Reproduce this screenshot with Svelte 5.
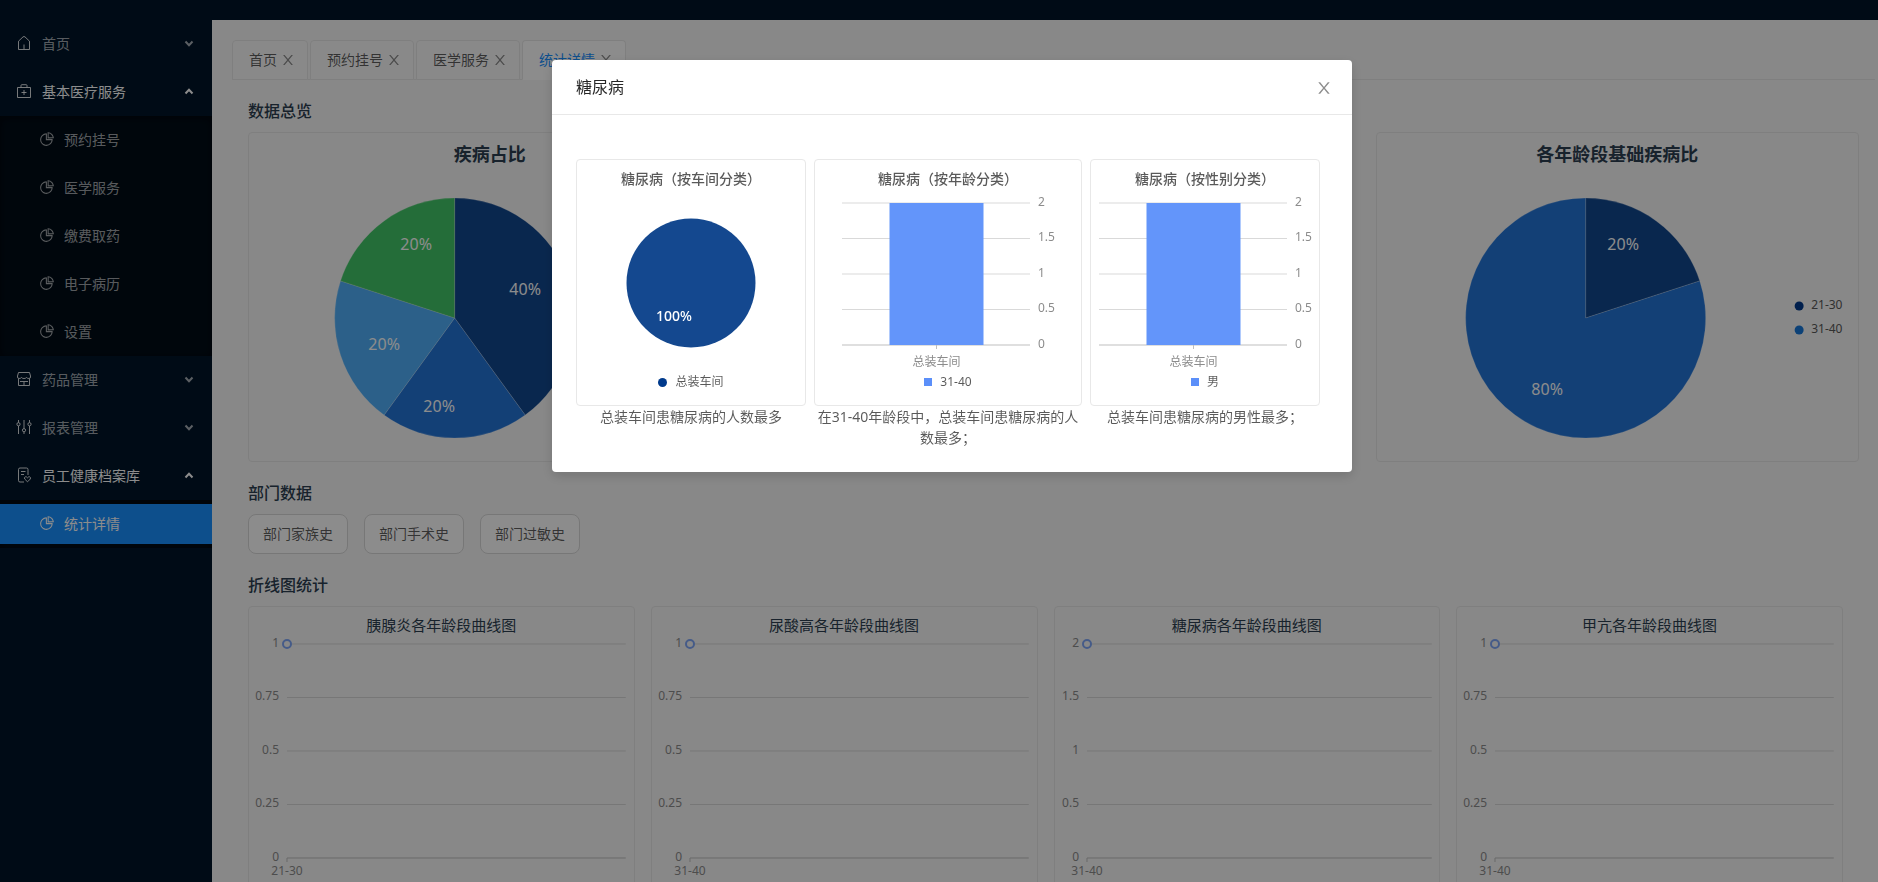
<script lang="ts">
  type Slice = { name: string; percent: number; color: string; x: number; y: number };

  const menu = [
    { title: "首页", icon: "home", open: false, children: [] },
    {
      title: "基本医疗服务",
      icon: "medicine",
      open: true,
      children: ["预约挂号", "医学服务", "缴费取药", "电子病历", "设置"],
    },
    { title: "药品管理", icon: "shop", open: false, children: [] },
    { title: "报表管理", icon: "sliders", open: false, children: [] },
    { title: "员工健康档案库", icon: "record", open: true, children: ["统计详情"] },
  ];

  const tabs = ["首页", "预约挂号", "医学服务", "统计详情"];
  const departments = ["部门家族史", "部门手术史", "部门过敏史"];
  let current = $state("统计详情");
  let modalOpen = $state(true);

  const diseaseSlices: Slice[] = [
    { name: "a", percent: 40, color: "#12488f", x: 276, y: 121 },
    { name: "b", percent: 20, color: "#2375d8", x: 190, y: 238 },
    { name: "c", percent: 20, color: "#50b0fa", x: 135, y: 176 },
    { name: "d", percent: 20, color: "#43c768", x: 167, y: 76 },
  ];

  const ageSlices: Slice[] = [
    { name: "21-30", percent: 20, color: "#12488f", x: 246, y: 76 },
    { name: "31-40", percent: 80, color: "#2375d8", x: 170, y: 221 },
  ];

  const ageLegend = [
    { name: "21-30", color: "#003a8c" },
    { name: "31-40", color: "#1677d9" },
  ];

  const barTicks = ["2", "1.5", "1", "0.5", "0"];
  const quarterTicks = ["1", "0.75", "0.5", "0.25", "0"];

  const lineCharts = [
    { title: "胰腺炎各年龄段曲线图", ticks: quarterTicks, age: "21-30" },
    { title: "尿酸高各年龄段曲线图", ticks: quarterTicks, age: "31-40" },
    { title: "糖尿病各年龄段曲线图", ticks: barTicks, age: "31-40" },
    { title: "甲亢各年龄段曲线图", ticks: quarterTicks, age: "31-40" },
  ];

  // Room for the widest label left of the axis
  function gutter(ticks: string[]) {
    const longest = Math.max(...ticks.map((t) => t.length));
    return longest > 3 ? 38 : 32;
  }

  // Pie slices as paths, clockwise from twelve o'clock
  function slicePaths(slices: Slice[], cx: number, cy: number, r: number) {
    let start = 0;
    return slices.map((s) => {
      const end = start + (s.percent / 100) * Math.PI * 2;
      const x1 = cx + r * Math.sin(start);
      const y1 = cy - r * Math.cos(start);
      const x2 = cx + r * Math.sin(end);
      const y2 = cy - r * Math.cos(end);
      const large = s.percent > 50 ? 1 : 0;
      start = end;
      return { ...s, d: `M${cx} ${cy}L${x1} ${y1}A${r} ${r} 0 ${large} 1 ${x2} ${y2}Z` };
    });
  }
</script>

{#snippet closeIcon()}
  <svg class="close-icon" viewBox="0 0 1024 1024" aria-hidden="true">
    <path
      d="M563.8 512l262.5-312.9c4.4-5.2.7-13.1-6.1-13.1h-79.8c-4.7 0-9.2 2.1-12.3 5.7L511.6 449.8 295.1 191.7c-3-3.6-7.5-5.7-12.3-5.7H203c-6.8 0-10.5 7.9-6.1 13.1L459.4 512 196.9 824.9A7.95 7.95 0 0 0 203 838h79.8c4.7 0 9.2-2.1 12.3-5.7l216.5-258.1 216.5 258.1c3 3.6 7.5 5.7 12.3 5.7h79.8c6.8 0 10.5-7.9 6.1-13.1L563.8 512z"
    />
  </svg>
{/snippet}

{#snippet menuIcon(name: string)}
  <svg class="menu-icon" viewBox="0 0 16 16" aria-hidden="true">
    {#if name === "home"}
      <path d="M2.5 14.5V6.2L7 1.9q1-.8 2 0l4.5 4.3v8.3zM8 14V9.5" />
    {:else if name === "medicine"}
      <path d="M1.5 4.5h13v10h-13zM5 4.300V2.500q0-.8.8-.8h4.400q.8 0 .8.8v1.800M8 7v5M5.500 9.500h5" />
    {:else if name === "shop"}
      <path d="M2.5 7.8v6.7h11V7.8M2.5 1.500h11l1 3.500v1q0 1.500-1.600 1.500T10.500 6.500q-.8 1-2.500 1t-2.500-1q-.8 1-2.400 1T1.500 6V5zM4 10.500h8M8 11v3.200" />
    {:else if name === "sliders"}
      <path d="M2.5 1v2.500M2.500 7v8M8 1v8.500M8 13v2M13.500 1v2.500M13.500 7v8" />
      <circle cx="2.5" cy="5.2" r="1.6" />
      <circle cx="8" cy="11.2" r="1.6" />
      <circle cx="13.5" cy="5.2" r="1.6" />
    {:else if name === "record"}
      <path d="M8 15H4q-1.500 0-1.500-1.500v-11Q2.500 1 4 1h6.500Q12 1 12 2.500V8M5 4.500h4.500M5 7.500h3" />
      <path d="M11.500 14.800 8.700 12q-.8-1.700.7-2.200 1.300-.2 2.100 1 .8-1.200 2.100-1 1.500.5.7 2.200z" />
    {:else}
      <path
        class="solid"
        transform="scale(.015625)"
        d="M864 518H506V160c0-4.4-3.6-8-8-8h-26a398.46 398.46 0 0 0-282.8 117.1 398.19 398.19 0 0 0-85.7 127.1A397.61 397.61 0 0 0 72 552a398.46 398.46 0 0 0 117.1 282.8c36.7 36.7 79.5 65.6 127.1 85.7A397.61 397.61 0 0 0 472 952a398.46 398.46 0 0 0 282.8-117.1c36.7-36.7 65.6-79.5 85.7-127.1A397.61 397.61 0 0 0 872 552v-26c0-4.4-3.6-8-8-8zM705.7 787.8A331.59 331.59 0 0 1 470.4 884c-88.1-.4-170.9-34.9-233.2-97.2C174.5 724.1 140 640.7 140 552c0-88.7 34.5-172.1 97.2-234.8 54.6-54.6 124.9-87.9 200.8-95.5V586h364.3c-7.7 76.3-41.3 147-96.6 201.8zM952 462.4l-2.6-28.2c-8.5-92.1-49.4-179-115.2-244.6A399.4 399.4 0 0 0 589 74.6L560.7 72c-4.7-.4-8.7 3.2-8.7 7.9V464c0 4.4 3.6 8 8 8l384-1c4.7 0 8.4-4 8-8.6zm-332.2-58.2V147.6a332.24 332.24 0 0 1 166.4 89.8c45.7 45.6 77 103.6 90 166.1l-256.4.7z"
      />
    {/if}
  </svg>
{/snippet}

{#snippet bigPie(slices: Slice[], cx: number, legend: { name: string; color: string }[])}
  <svg class="big-pie" viewBox="0 0 481 293">
    {#each slicePaths(slices, cx, 150, 120) as s (s.name)}
      <path class="slice" d={s.d} fill={s.color} />
    {/each}
    {#each slices as s (s.name)}
      <text class="slice-label" x={s.x} y={s.y}>{s.percent}%</text>
    {/each}
    {#each legend as item, i (item.name)}
      <circle cx="422" cy={138 + i * 24} r="4.5" fill={item.color} />
      <text class="legend-label" x="434" y={136 + i * 24}>{item.name}</text>
    {/each}
  </svg>
{/snippet}

{#snippet barChart()}
  <svg class="small-chart" viewBox="0 0 228 180">
    {#each barTicks as tick, i (tick)}
      <line class={tick === "0" ? "axis" : "grid"} x1="8" x2="196" y1={13 + i * 35.5} y2={13 + i * 35.5} />
      <text class="axis-label" x="204" y={11 + i * 35.5}>{tick}</text>
    {/each}
    <rect class="bar" x="55.5" y="13" width="94" height="142" />
    <line class="axis" x1="102.5" x2="102.5" y1="155" y2="159" />
    <text class="axis-label middle" x="102.5" y="171">总装车间</text>
  </svg>
{/snippet}

<div class="layout">
  <header class="topbar"></header>
  <div class="body">
    <nav class="sider">
      {#each menu as group (group.title)}
        <button class="menu-title" class:open={group.open} aria-expanded={group.open}>
          {@render menuIcon(group.icon)}
          <span>{group.title}</span>
          <svg class="arrow" viewBox="0 0 10 10" aria-hidden="true">
            <path d={group.open ? "M1.5 7.5 5 3.7 8.5 7.5" : "M1.5 3.5 5 7.3 8.5 3.5"} />
          </svg>
        </button>
        {#if group.open}
          <ul class="submenu">
            {#each group.children as item (item)}
              <li>
                <a class="menu-item" class:selected={item === current} href="#{item}">
                  {@render menuIcon("pie")}
                  <span>{item}</span>
                </a>
              </li>
            {/each}
          </ul>
        {/if}
      {/each}
    </nav>

    <main class="main">
      <div class="tabs">
        {#each tabs as tab (tab)}
          <div class="tab" class:active={tab === current}>
            <button class="tab-name" onclick={() => (current = tab)}>{tab}</button>
            <button class="tab-close" aria-label="关闭{tab}">{@render closeIcon()}</button>
          </div>
        {/each}
      </div>

      <div class="content">
        <h2>数据总览</h2>
        <div class="overview">
          <section class="card pie-card">
            <h3>疾病占比</h3>
            {@render bigPie(diseaseSlices, 205.5, [])}
          </section>
          <section class="card pie-card">
            <h3>各年龄段基础疾病比</h3>
            {@render bigPie(ageSlices, 208.5, ageLegend)}
          </section>
        </div>

        <h2>部门数据</h2>
        <div class="departments">
          {#each departments as name (name)}
            <button class="department">{name}</button>
          {/each}
        </div>

        <h2>折线图统计</h2>
        <div class="lines">
          {#each lineCharts as chart (chart.title)}
            <section class="card line-card">
              <h3>{chart.title}</h3>
              <div class="plot" style:padding-left="{gutter(chart.ticks)}px">
                <svg class="line-chart">
                  {#each chart.ticks as tick, i (tick)}
                    <line class={tick === "0" ? "axis" : "grid"} x1="0" x2="100%" y1={7 + i * 53.5} y2={7 + i * 53.5} />
                    <text class="axis-label end" x="-8" y={5 + i * 53.5}>{tick}</text>
                  {/each}
                  <line class="axis" x1="0" x2="0" y1="221" y2="225" />
                  <text class="axis-label middle" x="0" y="233">{chart.age}</text>
                  <circle class="point" cx="0" cy="7" r="4" />
                </svg>
              </div>
            </section>
          {/each}
        </div>
      </div>
    </main>
  </div>
</div>

{#if modalOpen}
  <div class="mask">
    <div class="modal" role="dialog" aria-modal="true" aria-labelledby="modal-title">
      <div class="modal-header">
        <h2 id="modal-title">糖尿病</h2>
        <button class="modal-close" aria-label="关闭" onclick={() => (modalOpen = false)}>
          {@render closeIcon()}
        </button>
      </div>
      <div class="modal-body">
        <figure>
          <div class="card small-card">
            <h3>糖尿病（按车间分类）</h3>
            <svg class="small-chart" viewBox="0 0 228 180">
              <circle cx="114" cy="93" r="64.5" fill="#14488f" />
              <text class="slice-label small" x="97" y="125">100%</text>
            </svg>
            <div class="legend"><i class="dot"></i>总装车间</div>
          </div>
          <figcaption>总装车间患糖尿病的人数最多</figcaption>
        </figure>
        <figure>
          <div class="card small-card">
            <h3>糖尿病（按年龄分类）</h3>
            {@render barChart()}
            <div class="legend"><i class="square"></i>31-40</div>
          </div>
          <figcaption>在31-40年龄段中，总装车间患糖尿病的人数最多；</figcaption>
        </figure>
        <figure>
          <div class="card small-card">
            <h3>糖尿病（按性别分类）</h3>
            {@render barChart()}
            <div class="legend"><i class="square"></i>男</div>
          </div>
          <figcaption>总装车间患糖尿病的男性最多；</figcaption>
        </figure>
      </div>
    </div>
  </div>
{/if}

<style>
  :global(body) {
    margin: 0;
    font-family: "Noto Sans", "Noto Sans CJK SC", sans-serif;
    font-size: 14px;
    line-height: 21px;
    color: rgba(0, 0, 0, 0.65);
  }

  * {
    box-sizing: border-box;
  }

  h2,
  h3,
  ul,
  figure {
    margin: 0;
    padding: 0;
  }

  button {
    padding: 0;
    border: 0;
    background: none;
    font: inherit;
    color: inherit;
    cursor: pointer;
  }

  .layout {
    display: flex;
    flex-direction: column;
    height: 100vh;
    overflow: hidden;
    background: #f8f8f8;
  }

  .topbar {
    flex: 0 0 20px;
    background: #001529;
  }

  .body {
    display: flex;
    flex: 1;
    min-height: 0;
  }

  /* Side menu */
  .sider {
    flex: 0 0 212px;
    background: #001529;
    color: rgba(255, 255, 255, 0.65);
  }

  .menu-title,
  .menu-item {
    display: flex;
    align-items: center;
    gap: 10px;
    width: 100%;
    text-align: left;
  }

  .menu-title {
    height: 48px;
    padding: 0 18px 2px 16px;
  }

  .menu-title span {
    flex: 1;
  }

  .menu-title.open {
    color: #fff;
  }

  .menu-icon {
    width: 16px;
    height: 16px;
    fill: none;
    stroke: currentColor;
  }

  .menu-title .menu-icon {
    color: rgba(255, 255, 255, 0.85);
  }

  .menu-icon .solid {
    fill: currentColor;
    stroke: none;
  }

  .arrow {
    width: 10px;
    height: 10px;
    fill: none;
    stroke: currentColor;
    stroke-width: 2;
  }

  .submenu {
    list-style: none;
    background: #000c17;
    box-shadow: inset 0 2px 8px rgba(0, 0, 0, 0.45);
  }

  .submenu li {
    padding: 4px 0;
  }

  .menu-item {
    gap: 9px;
    height: 40px;
    padding: 0 0 2px 39px;
    color: inherit;
    text-decoration: none;
  }

  .menu-item.selected {
    background: #1890ff;
    color: #fff;
  }

  /* Tabs */
  .main {
    flex: 1;
    min-width: 0;
    padding: 20px 3px 0 20px;
  }

  .tabs {
    display: flex;
    gap: 2px;
    height: 40px;
    border-bottom: 1px solid #e8e8e8;
  }

  .tab {
    display: flex;
    align-items: center;
    gap: 3px;
    height: 40px;
    padding: 0 11px 1px 16px;
    border: 1px solid #e8e8e8;
    border-radius: 4px 4px 0 0;
    background: #fafafa;
  }

  .tab.active {
    border-bottom-color: #fff;
    background: #fff;
    color: #1890ff;
  }

  .tab-close {
    width: 16px;
    height: 16px;
    color: rgba(0, 0, 0, 0.45);
  }

  .close-icon {
    display: block;
    width: 100%;
    fill: currentColor;
  }

  /* Page content */
  .content {
    padding: 0 16px;
    color: #2c3e50;
  }

  .content h2 {
    padding: 19px 0 9px;
    font-size: 16px;
    line-height: 24px;
    font-weight: 500;
  }

  .card {
    border: 1px solid #e8e8e8;
    border-radius: 4px;
  }

  .card h3 {
    text-align: center;
  }

  .overview {
    display: flex;
    justify-content: space-between;
  }

  .pie-card {
    width: 30%;
    padding-top: 8px;
  }

  .pie-card h3 {
    font-size: 18px;
    line-height: 27px;
    font-weight: 700;
  }

  .big-pie {
    display: block;
    width: 100%;
    height: 293px;
  }

  .slice {
    stroke: rgba(255, 255, 255, 0.2);
  }

  .departments {
    display: flex;
    gap: 16px;
  }

  .department {
    width: 100px;
    height: 40px;
    padding-bottom: 2px;
    border: 1px solid #d9d9d9;
    border-radius: 8px;
    background: #fff;
    color: rgba(0, 0, 0, 0.65);
  }

  .lines {
    display: grid;
    grid-template-columns: repeat(4, 1fr);
    gap: 16px;
    padding-right: 16px;
  }

  .line-card {
    padding-top: 7px;
  }

  .line-card h3 {
    padding-bottom: 1px;
    font-size: 15px;
    line-height: 22px;
    font-weight: 400;
  }

  .plot {
    padding-right: 8px;
  }

  .line-chart {
    display: block;
    width: 100%;
    height: 260px;
    overflow: visible;
  }

  /* Chart parts */
  text {
    dominant-baseline: central;
  }

  .slice-label {
    fill: #fff;
    font-size: 16px;
    text-anchor: middle;
  }

  .slice-label.small {
    font-size: 14px;
    font-weight: 500;
  }

  .legend-label {
    fill: #595959;
    font-size: 12px;
  }

  .axis-label {
    fill: #8c8c8c;
    font-size: 12px;
  }

  .middle {
    text-anchor: middle;
  }

  .end {
    text-anchor: end;
  }

  .grid {
    stroke: #d9d9d9;
  }

  .axis {
    stroke: #bfbfbf;
  }

  .bar {
    fill: #6395fa;
  }

  .point {
    fill: #f8f8f8;
    stroke: #7fa6f8;
    stroke-width: 2;
  }

  /* Modal */
  .mask {
    position: fixed;
    inset: 0;
    display: flex;
    align-items: flex-start;
    justify-content: center;
    padding: 60px 0 0 26px;
    background: rgba(0, 0, 0, 0.45);
  }

  .modal {
    width: 800px;
    border-radius: 4px;
    background: #fff;
    box-shadow: 0 4px 12px rgba(0, 0, 0, 0.15);
  }

  .modal-header {
    display: flex;
    align-items: flex-start;
    justify-content: space-between;
    height: 55px;
    padding-left: 24px;
    border-bottom: 1px solid #e8e8e8;
  }

  .modal-header h2 {
    font-size: 16px;
    line-height: 54px;
    font-weight: 400;
    color: rgba(0, 0, 0, 0.85);
  }

  .modal-close {
    display: flex;
    align-items: center;
    justify-content: center;
    width: 56px;
    height: 56px;
    color: rgba(0, 0, 0, 0.45);
  }

  .modal-close .close-icon {
    width: 18px;
  }

  .modal-body {
    display: grid;
    grid-template-columns: 230fr 268fr 230fr;
    gap: 8px;
    padding: 44px 32px 24px 24px;
  }

  .small-card {
    padding: 8px 0 11px;
  }

  .small-card h3 {
    padding-bottom: 1px;
    font-size: 14px;
    line-height: 21px;
    font-weight: 500;
  }

  .small-chart {
    display: block;
    width: 100%;
    height: 180px;
  }

  .legend {
    display: flex;
    align-items: center;
    justify-content: center;
    gap: 8px;
    font-size: 12px;
    line-height: 24px;
  }

  .dot {
    width: 9px;
    height: 9px;
    border-radius: 50%;
    background: #003a8c;
  }

  .square {
    width: 8px;
    height: 8px;
    background: #5b8ff9;
  }

  figcaption {
    text-align: center;
  }
</style>
